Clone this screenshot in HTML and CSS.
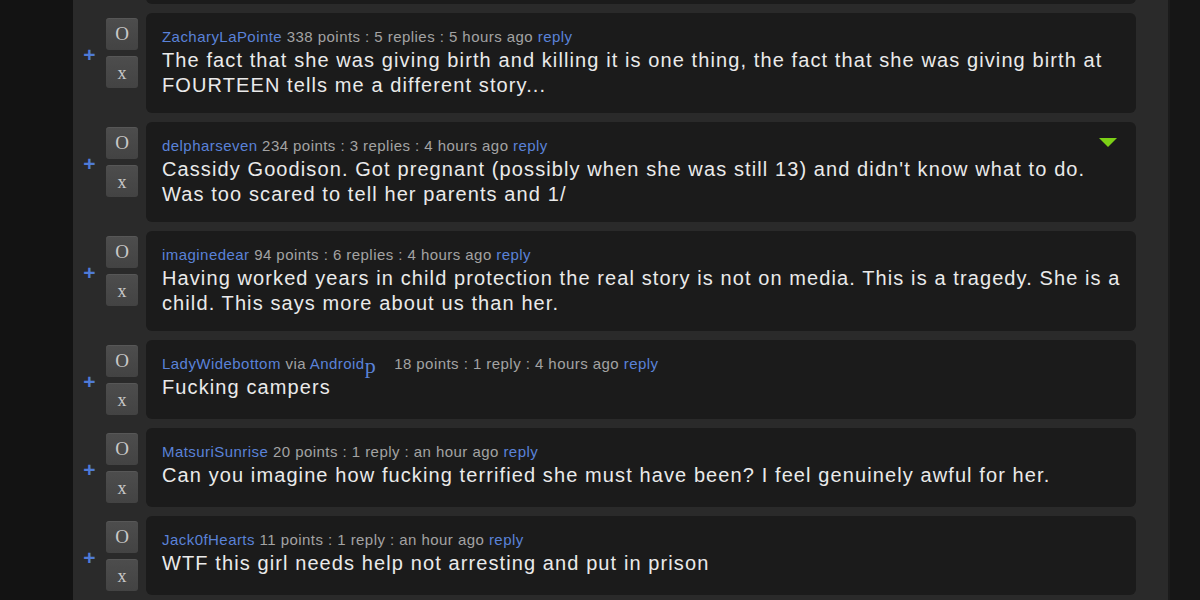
FILE: index.html
```html
<!DOCTYPE html>
<html>
<head>
<meta charset="utf-8">
<link rel="stylesheet" href="styles.css">
</head>
<body>
<div class="page">
  <div class="thread">
    <div class="row row-first">
      <div class="plus">+</div>
      <div class="votes"><div class="vbtn">O</div><div class="vbtn vx">x</div></div>
      <div class="card">
        <div class="meta"><a class="user">someone</a> 40 points : 1 reply : 5 hours ago <a class="reply">reply</a></div>
        <div class="body">...</div>
      </div>
    </div>

    <div class="row">
      <div class="plus">+</div>
      <div class="votes"><div class="vbtn">O</div><div class="vbtn vx">x</div></div>
      <div class="card">
        <div class="meta"><a class="user">ZacharyLaPointe</a> 338 points : 5 replies : 5 hours ago <a class="reply">reply</a></div>
        <div class="body">The fact that she was giving birth and killing it is one thing, the fact that she was giving birth at FOURTEEN tells me a different story...</div>
      </div>
    </div>

    <div class="row">
      <div class="plus">+</div>
      <div class="votes"><div class="vbtn">O</div><div class="vbtn vx">x</div></div>
      <div class="card">
        <span class="collapse"></span>
        <div class="meta"><a class="user">delpharseven</a> 234 points : 3 replies : 4 hours ago <a class="reply">reply</a></div>
        <div class="body">Cassidy Goodison. Got pregnant (possibly when she was still 13) and didn't know what to do. Was too scared to tell her parents and 1/</div>
      </div>
    </div>

    <div class="row">
      <div class="plus">+</div>
      <div class="votes"><div class="vbtn">O</div><div class="vbtn vx">x</div></div>
      <div class="card">
        <div class="meta"><a class="user">imaginedear</a> 94 points : 6 replies : 4 hours ago <a class="reply">reply</a></div>
        <div class="body">Having worked years in child protection the real story is not on media. This is a tragedy. She is a child. This says more about us than her.</div>
      </div>
    </div>

    <div class="row">
      <div class="plus">+</div>
      <div class="votes"><div class="vbtn">O</div><div class="vbtn vx">x</div></div>
      <div class="card">
        <div class="meta"><a class="user">LadyWidebottom</a> via <a class="user">Android</a><span class="dev">p</span>&nbsp;&nbsp;&nbsp; 18 points : 1 reply : 4 hours ago <a class="reply">reply</a></div>
        <div class="body">Fucking campers</div>
      </div>
    </div>

    <div class="row">
      <div class="plus">+</div>
      <div class="votes"><div class="vbtn">O</div><div class="vbtn vx">x</div></div>
      <div class="card">
        <div class="meta"><a class="user">MatsuriSunrise</a> 20 points : 1 reply : an hour ago <a class="reply">reply</a></div>
        <div class="body">Can you imagine how fucking terrified she must have been? I feel genuinely awful for her.</div>
      </div>
    </div>

    <div class="row">
      <div class="plus">+</div>
      <div class="votes"><div class="vbtn">O</div><div class="vbtn vx">x</div></div>
      <div class="card">
        <div class="meta"><a class="user">Jack0fHearts</a> 11 points : 1 reply : an hour ago <a class="reply">reply</a></div>
        <div class="body">WTF this girl needs help not arresting and put in prison</div>
      </div>
    </div>
  </div>
  <div class="side"></div>
</div>
</body>
</html>
```

FILE: styles.css
```css
html, body {
  margin: 0;
  padding: 0;
  background: #131313;
  height: 100%;
  overflow: hidden;
}
body {
  font-family: "Liberation Sans", Arial, Helvetica, sans-serif;
}
.page {
  display: flex;
  height: 600px;
  padding-left: 73px;
}
.thread {
  width: 1063px;
  background: #2a2a2a;
  padding-right: 32px;
  display: flex;
  flex-direction: column;
  gap: 9px;
}
.side {
  width: 32px;
  background: #161616;
  border-left: 2px solid #1b1b1b;
  box-sizing: border-box;
}
.row {
  display: flex;
  align-items: stretch;
}
.row-first {
  margin-top: -75px;
}
.plus {
  width: 33px;
  height: 79px;
  align-self: flex-start;
  display: flex;
  align-items: center;
  justify-content: center;
  color: #4f7bd6;
  font-size: 21px;
  font-weight: bold;
  padding-top: 4px;
  box-sizing: border-box;
}
.votes {
  width: 32px;
  padding: 5px 0 4px;
  display: flex;
  flex-direction: column;
  gap: 6px;
  margin-right: 8px;
}
.vbtn {
  height: 32px;
  border-radius: 3px;
  background: linear-gradient(#4d4d4d, #434343);
  box-shadow: inset 0 1px 0 rgba(255,255,255,0.06);
  color: #c8c8c8;
  font-family: "Liberation Serif", "Times New Roman", serif;
  font-size: 19px;
  display: flex;
  align-items: center;
  justify-content: center;
}
.vx {
  font-size: 18px;
  padding-top: 2px;
  box-sizing: border-box;
}
.card {
  position: relative;
  flex: 1;
  background: #1b1b1b;
  border-radius: 6px;
  padding: 13px 8px 15px 16px;
}
.meta {
  font-size: 15px;
  line-height: 21px;
  color: #a3a3a3;
  letter-spacing: 0.45px;
}
.user, .reply {
  color: #5a82d8;
}
.dev {
  color: #5a82d8;
  font-family: "Liberation Serif", "Times New Roman", serif;
  font-size: 22px;
  vertical-align: -4px;
  line-height: 0;
  letter-spacing: 0;
}
.body {
  font-size: 20px;
  line-height: 25px;
  color: #eaeaea;
  letter-spacing: 1.1px;
  padding-top: 1px;
}
.collapse {
  position: absolute;
  top: 16px;
  right: 19px;
  width: 0;
  height: 0;
  border-left: 9px solid transparent;
  border-right: 9px solid transparent;
  border-top: 9px solid #7cd016;
}
```
